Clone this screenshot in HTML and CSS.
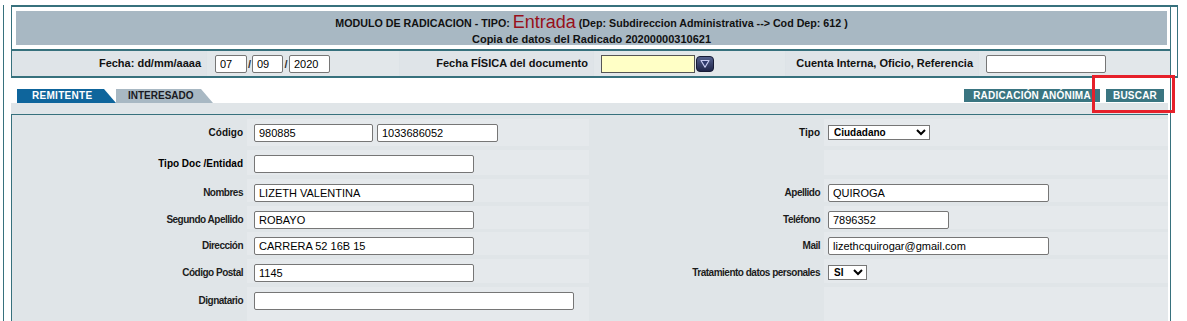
FILE: index.html
```html
<!DOCTYPE html>
<html lang="es">
<head>
<meta charset="utf-8">
<title>Radicación</title>
<link rel="stylesheet" href="styles.css">
</head>
<body>
<div class="page">
  <div class="hdr">
    <div class="title">
      <div class="t1">MODULO DE RADICACION - TIPO: <span class="tipo">Entrada</span> (Dep: Subdireccion Administrativa --&gt; Cod Dep: 612 )</div>
      <div class="t2">Copia de datos del Radicado 20200000310621</div>
    </div>
    <div class="fecha">
      <div class="fl">Fecha: dd/mm/aaaa</div>
      <div class="fv p8"><input class="in w32" value="07"><span class="sl">/</span><input class="in w31" value="09"><span class="sl sl2">/</span><input class="in w41" value="2020"></div>
      <div class="fl">Fecha FÍSICA del documento</div>
      <div class="fv p7"><input class="in yel"><svg class="cal" width="18" height="16" viewBox="0 0 18 16"><defs><linearGradient id="cg" x1="0" y1="0" x2="0" y2="1"><stop offset="0" stop-color="#56628f"/><stop offset="1" stop-color="#1d2347"/></linearGradient></defs><rect x="0.5" y="0.5" width="17" height="15" rx="3.5" fill="url(#cg)" stroke="#171c36"/><path d="M5 4.5 H13 L9 11.2 Z" fill="#2f3a6c" stroke="#c7cbf0" stroke-width="1.2" stroke-linejoin="round"/></svg></div>
      <div class="fl">Cuenta Interna, Oficio, Referencia</div>
      <div class="fv p7"><input class="in w120"></div>
    </div>
  </div>

  <div class="tabbar">
    <div class="tabs">
      <span class="tab on">REMITENTE</span>
      <span class="tab off">INTERESADO</span>
    </div>
    <div class="btns">
      <span class="btn anon">RADICACIÓN ANÓNIMA</span>
      <span class="btn buscar">BUSCAR</span>
    </div>
  </div>

  <div class="panel">
    <div class="grid">
      <div class="row">
        <div class="lab b">Código</div>
        <div class="val v1"><input class="in w119" value="980885"><input class="in w121 ml5" value="1033686052"></div>
        <div class="lab b">Tipo</div>
        <div class="val v2"><select class="sel w102"><option>Ciudadano</option></select></div>
      </div>
      <div class="row">
        <div class="lab bk">Tipo Doc /Entidad</div>
        <div class="val v1"><input class="in w220"></div>
        <div class="lab"></div>
        <div class="val v2"></div>
      </div>
      <div class="row">
        <div class="lab">Nombres</div>
        <div class="val v1"><input class="in w220" value="LIZETH VALENTINA"></div>
        <div class="lab">Apellido</div>
        <div class="val v2"><input class="in w221" value="QUIROGA"></div>
      </div>
      <div class="row">
        <div class="lab">Segundo Apellido</div>
        <div class="val v1"><input class="in w220" value="ROBAYO"></div>
        <div class="lab">Teléfono</div>
        <div class="val v2"><input class="in w121" value="7896352"></div>
      </div>
      <div class="row">
        <div class="lab">Dirección</div>
        <div class="val v1"><input class="in w220" value="CARRERA 52 16B 15"></div>
        <div class="lab">Mail</div>
        <div class="val v2"><input class="in w221" value="lizethcquirogar@gmail.com"></div>
      </div>
      <div class="row">
        <div class="lab">Código Postal</div>
        <div class="val v1"><input class="in w220" value="1145"></div>
        <div class="lab">Tratamiento datos personales</div>
        <div class="val v2"><select class="sel w39"><option>SI</option></select></div>
      </div>
      <div class="row">
        <div class="lab">Dignatario</div>
        <div class="val v1"><input class="in w320"></div>
        <div class="lab"></div>
        <div class="val v2"></div>
      </div>
    </div>
  </div>
</div>
<div class="mark"></div>
</body>
</html>
```

FILE: styles.css
```css
html { overflow: hidden; }
body {
  margin: 0;
  padding-top: 5px;
  background: #ffffff;
  font-family: "Liberation Sans", Arial, sans-serif;
  color: #000;
  position: relative;
  height: 316px;
  overflow: hidden;
}
.page {
  margin-left: 3px;
  width: 1166px;
  height: 316px;
  border-left: 1px solid #37717d;
  border-right: 1px solid #37717d;
}

/* header */
.hdr {
  margin-left: 7px;
  width: 1165px;
  border: 1px solid #37717d;
  border-top-width: 2px;
  border-bottom-width: 2px;
}
.title {
  margin: 4px 10px 4px 4px;
  height: 34px;
  background: #a8b8c3;
  text-align: center;
  font-weight: bold;
  font-size: 11px;
  color: #111;
}
.t1 { line-height: 21px; padding-top: 1px; font-size: 10.7px; }
.tipo {
  font-size: 18px;
  font-weight: normal;
  color: #98101a;
  vertical-align: -1px;
}
.t2 { line-height: 11px; }

.fecha {
  width: 1158px;
  height: 25px;
  border-top: 2px solid #37717d;
  display: grid;
  grid-template-columns: 194px 192px 193px 191px 192px 1fr;
  column-gap: 1px;
  background: #dde3e7;
}
.fl {
  background: #dfe4e8;
  text-align: right;
  padding-right: 5px;
  font-weight: bold;
  font-size: 11px;
  line-height: 25px;
  color: #111;
}
.fv {
  background: #e2e7ea;
  display: flex;
  align-items: center;
}
.p8 { padding-left: 8px; }
.p7 { padding-left: 7px; }
.sl {
  font-size: 11px;
  font-weight: bold;
  width: 5px;
  text-align: center;
  color: #333;
}
.sl2 { width: 6px; }

.in {
  box-sizing: border-box;
  height: 18px;
  border: 1px solid #767676;
  border-radius: 2px;
  padding: 0 4px;
  margin: 0;
  font-family: "Liberation Sans", Arial, sans-serif;
  font-size: 11px;
  color: #000;
  background: #fff;
}
.w31 { width: 31px; }
.w32 { width: 32px; }
.w41 { width: 41px; }
.w119 { width: 119px; }
.w120 { width: 120px; }
.w121 { width: 121px; }
.w220 { width: 220px; }
.w221 { width: 221px; }
.w320 { width: 320px; }
.ml5 { margin-left: 4px; }
.yel {
  width: 94px;
  background: #ffffc6;
  border-color: #555;
  border-radius: 0;
}
.cal { margin-left: 1px; display: block; }

/* tabs */
.tabbar {
  margin-left: 7px;
  margin-top: 11px;
  width: 1157px;
  height: 14px;
  display: flex;
  justify-content: space-between;
}
.tabs { display: flex; padding-left: 6px; }
.tab {
  height: 14px;
  line-height: 14px;
  font-size: 10px;
  font-weight: bold;
  clip-path: polygon(0 0, calc(100% - 12px) 0, 100% 100%, 0 100%);
}
.on {
  width: 99px;
  padding-left: 15px;
  box-sizing: border-box;
  background: #0e659c;
  color: #fff;
  letter-spacing: 0.3px;
}
.off {
  width: 97px;
  padding-left: 12px;
  box-sizing: border-box;
  background: #a8b8c3;
  color: #1a1a22;
}
.btns { display: flex; gap: 6px; padding-right: 4px; }
.btn {
  height: 13px;
  line-height: 13px;
  background: #3a7581;
  color: #fff;
  font-size: 10px;
  font-weight: bold;
  text-align: center;
  white-space: nowrap;
  letter-spacing: 0.2px;
}
.anon { width: 136px; }
.buscar { width: 58px; }

/* form panel */
.panel {
  margin-left: 7px;
  width: 1157px;
  height: 218px;
  padding-top: 11px;
  background: #e0e5e8;
  box-sizing: border-box;
}
.grid {
  border-top: 1px solid #37717d;
  border-left: 1px solid #37717d;
}
.row {
  display: grid;
  grid-template-columns: 234px 342px 233px 1fr;
  column-gap: 1px;
  padding-top: 4px;
  box-sizing: border-box;
}
.row:nth-child(1) { height: 31px; }
.row:nth-child(2) { height: 29px; }
.row:nth-child(3) { height: 27px; }
.row:nth-child(4) { height: 26px; }
.row:nth-child(5) { height: 27px; }
.row:nth-child(6) { height: 28px; }
.row:nth-child(7) { height: 38px; }
.lab {
  padding-top: 5px;
  padding-right: 3px;
  text-align: right;
  line-height: 18px;
  font-family: "Liberation Sans", Arial, sans-serif;
  font-weight: bold;
  font-size: 10px;
  letter-spacing: -0.5px;
  color: #1c1c1c;
}
.lab.b, .lab.bk {
  letter-spacing: 0;
  color: #111;
}
.lab.bk { color: #000; }
.val {
  padding-top: 5px;
  background: #e5e9ec;
  display: flex;
  align-items: flex-start;
}
.v1 { padding-left: 7px; }
.v2 { padding-left: 4px; }
.sel {
  margin-top: 1px;
  height: 15px;
  font-family: "Liberation Sans", Arial, sans-serif;
  font-size: 10px;
  font-weight: bold;
  color: #000;
  background: #fff;
  border: 1px solid #767676;
  border-radius: 0;
  padding: 0 0 0 1px;
}
.w102 { width: 102px; }
.w39 { width: 39px; }

/* highlight overlay */
.mark {
  position: absolute;
  left: 1092px;
  top: 75px;
  width: 83px;
  height: 38px;
  box-sizing: border-box;
  border: 3px solid #e6202a;
}
```
